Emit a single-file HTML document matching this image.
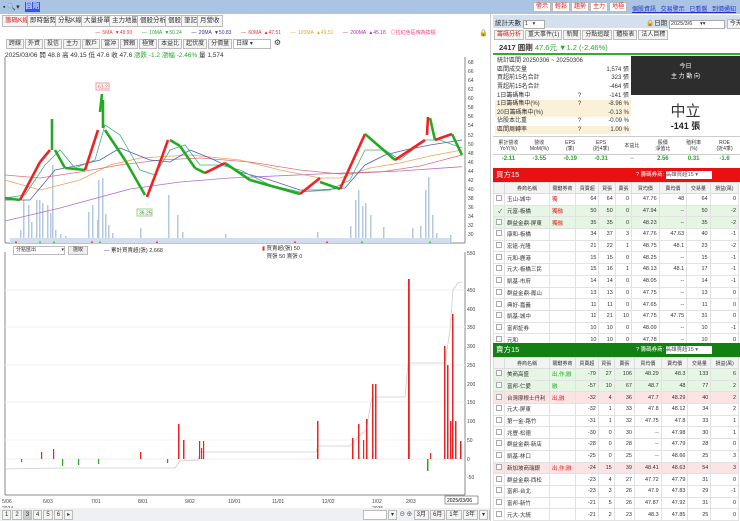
<!DOCTYPE html>
<html><head><meta charset="utf-8">
<style>
*{margin:0;padding:0;box-sizing:border-box}
body{width:740px;height:521px;overflow:hidden;background:#fff;font-family:"Liberation Sans","Noto Sans CJK TC",sans-serif;font-size:6px;color:#333;position:relative}
.a{position:absolute;white-space:nowrap}
.tab{position:absolute;top:15px;height:12px;border:1px solid #bbb;background:#f6f6f6;font-size:6.5px;line-height:10px;padding:0 2px;color:#333}
.tb{display:inline-block;border:1px solid #bbb;background:#f4f4f4;height:10px;line-height:8px;padding:0 2px;margin-right:1px;font-size:6px}
table{border-collapse:collapse}
.st td{font-size:6px;height:8.6px;line-height:8px;padding:0 2px}
.bt{width:246px;font-size:5.5px}
.bt td{border:1px solid #e2e2e2;height:11.7px;padding:0 2px;text-align:right}
.bt td:nth-child(1){width:8px}
.bt td:nth-child(2){text-align:left;width:45px}
.bt td:nth-child(3){text-align:left;width:26px}
.bt th{border:1px solid #ddd;background:#f3f3f3;font-weight:normal;height:11px;font-size:5px}
.cb{display:inline-block;width:6px;height:6px;border:1px solid #aaa;background:#fff}
</style></head><body>
<div class="a" style="left:0;top:0;width:740px;height:14px;background:#abc4e4"></div>
<div class="a" style="left:3px;top:3px;font-size:7px;color:#333">▪ 🔍▾</div>
<div class="a" style="left:25px;top:2px;width:15px;height:10px;background:#3355ee;color:#fff;font-size:7px;line-height:10px;text-align:center">圓剛</div>
<div class="a" style="left:533px;top:2px;font-size:5.5px">
<span class="tb" style="color:#d22;background:#fff">警示</span><span class="tb" style="color:#d22;background:#fff">輕鬆</span><span class="tb" style="color:#d22;background:#fff">趨勢</span><span class="tb" style="color:#d22;background:#fff">主力</span><span class="tb" style="color:#d22;background:#fff">地極</span></div>
<div class="a" style="left:632px;top:4px;font-size:6px;color:#2233cc;text-decoration:underline;word-spacing:3px">個股資訊 交易警示 已看盤 到價通知</div>
<div class="a" style="left:0;top:14px;width:490px;height:14px;background:#fff"></div>
<div class="tab" style="left:2px;color:#d22">籌碼K線</div>
<div class="tab" style="left:27px">即時盤勢</div>
<div class="tab" style="left:55px">分點K線</div>
<div class="tab" style="left:81px">大量掛單</div>
<div class="tab" style="left:109px">主力地圖</div>
<div class="tab" style="left:137px">個股分析</div>
<div class="tab" style="left:165px">個股</div>
<div class="tab" style="left:181px">筆記</div>
<div class="tab" style="left:197px">月營收</div>
<div class="a" style="left:95px;top:29px;font-size:5px;word-spacing:1px"><span style="color:#d44">— 5MA ▼48.90</span>&nbsp;&nbsp;&nbsp;&nbsp;<span style="color:#3a3">— 10MA ▼50.24</span>&nbsp;&nbsp;&nbsp;&nbsp;<span style="color:#33a">— 20MA ▼50.83</span>&nbsp;&nbsp;&nbsp;&nbsp;<span style="color:#d33">— 60MA ▲47.51</span>&nbsp;&nbsp;&nbsp;&nbsp;<span style="color:#da3">— 120MA ▲49.51</span>&nbsp;&nbsp;&nbsp;&nbsp;<span style="color:#a3a">— 200MA ▲45.18</span>&nbsp;&nbsp;<span style="color:#e48">◎拉紅色區塊為換檔</span></div>
<div class="a" style="left:479px;top:29px;font-size:7px">🔒</div>
<div class="a" style="left:6px;top:38px"><span class="tb">跨線</span><span class="tb">外資</span><span class="tb">投信</span><span class="tb">主力</span><span class="tb">散戶</span><span class="tb">當沖</span><span class="tb">贊賴</span><span class="tb">極覽</span><span class="tb">本益比</span><span class="tb">起伏度</span><span class="tb">分價量</span><span class="tb" style="width:38px;background:#fff">日線 ▾</span> <span style="font-size:8px">⚙</span></div>
<div class="a" style="left:5px;top:49px;font-size:6.5px">2025/03/06 開 48.8 高 49.15 低 47.6 收 47.6 <span style="color:#2a2">漲跌 -1.2 漲幅 -2.46%</span> 量 1,574</div>
<svg class="a" style="left:0;top:55px" width="490" height="190" viewBox="0 55 490 190">
<line x1="5" y1="57" x2="5" y2="243" stroke="#888"/>
<line x1="465" y1="57" x2="465" y2="243" stroke="#888"/>
<line x1="5" y1="243" x2="465" y2="243" stroke="#888"/>
<g font-size="5" fill="#444" font-family="Liberation Sans">
<text x="468" y="64">68</text><text x="468" y="73">66</text><text x="468" y="82">64</text><text x="468" y="91">62</text><text x="468" y="100">60</text><text x="468" y="109">58</text><text x="468" y="118">56</text><text x="468" y="127">54</text><text x="468" y="137">52</text><text x="468" y="146">50</text><text x="468" y="155">48</text><text x="468" y="164">46</text><text x="468" y="173">44</text><text x="468" y="182">42</text><text x="468" y="191">40</text><text x="468" y="200">38</text><text x="468" y="209">36</text><text x="468" y="218">34</text><text x="468" y="227">32</text><text x="468" y="236">30</text></g>
<g fill="#b4c8e2">
<rect x="20" y="230" width="1.5" height="13"/><rect x="23" y="200" width="1.5" height="43"/><rect x="28" y="205" width="1.5" height="38"/><rect x="31" y="222" width="1.5" height="21"/><rect x="36" y="200" width="1.5" height="43"/><rect x="39" y="200" width="1.5" height="43"/><rect x="42" y="203" width="1.5" height="40"/><rect x="47" y="205" width="1.5" height="38"/><rect x="50" y="213" width="1.5" height="30"/><rect x="52" y="165" width="1.5" height="78"/><rect x="55" y="230" width="1.5" height="13"/><rect x="60" y="234" width="1.5" height="9"/><rect x="65" y="236" width="1.5" height="7"/><rect x="88" y="212" width="1.5" height="31"/><rect x="92" y="205" width="1.5" height="38"/><rect x="97" y="220" width="1.5" height="23"/><rect x="98" y="180" width="1.5" height="63"/><rect x="102" y="178" width="1.5" height="65"/><rect x="105" y="214" width="1.5" height="29"/><rect x="108" y="225" width="1.5" height="18"/><rect x="112" y="233" width="1.5" height="10"/><rect x="140" y="228" width="1.5" height="15"/><rect x="168" y="195" width="1.5" height="48"/><rect x="177" y="215" width="1.5" height="28"/><rect x="182" y="232" width="1.5" height="11"/><rect x="225" y="234" width="1.5" height="9"/><rect x="317" y="232" width="1.5" height="11"/><rect x="350" y="226" width="1.5" height="17"/><rect x="355" y="200" width="1.5" height="43"/><rect x="358" y="190" width="1.5" height="53"/><rect x="362" y="206" width="1.5" height="37"/><rect x="365" y="203" width="1.5" height="40"/><rect x="370" y="215" width="1.5" height="28"/><rect x="383" y="227" width="1.5" height="16"/><rect x="412" y="228" width="1.5" height="15"/><rect x="420" y="226" width="1.5" height="17"/><rect x="425" y="190" width="1.5" height="53"/><rect x="428" y="177" width="1.5" height="66"/><rect x="432" y="215" width="1.5" height="28"/><rect x="436" y="233" width="1.5" height="10"/><rect x="450" y="235" width="1.5" height="8"/>
</g>
<g fill="#d2dded"><rect x="10" y="238" width="440" height="5"/></g>
<polyline fill="none" stroke="#b66ed0" stroke-width="0.8" points="5,221 60,208 130,189 180,182 230,178 330,173.5 400,171 462,166.7"/>
<polyline fill="none" stroke="#f0a050" stroke-width="0.8" points="5,180 40,190 80,180 110,165 140,158 190,155 240,160 280,170 320,178 340,178 370,168 400,163 430,156 462,150"/>
<polyline fill="none" stroke="#e07080" stroke-width="0.8" points="5,175 40,178 80,172 120,165 160,160 200,158 250,162 300,170 340,174 380,172 420,166 462,155"/>
<polyline fill="none" stroke="#5060c0" stroke-width="0.8" points="5,200 30,200 55,170 80,165 100,160 120,148 150,160 170,162 190,150 210,158 240,172 270,180 300,190 320,190 345,188 365,165 385,155 405,150 430,145 462,140"/>
<polyline fill="none" stroke="#40b080" stroke-width="0.8" points="5,198 25,195 45,165 60,150 75,168 95,160 105,125 120,135 140,170 155,175 170,150 185,145 200,165 220,165 240,170 270,185 300,192 330,190 350,180 365,150 385,150 400,160 425,140 440,140 462,148"/>
<g stroke-width="2.6">
<line x1="5" y1="198" x2="20" y2="200" stroke="#2a2"/>
<line x1="20" y1="200" x2="40" y2="162" stroke="#e22"/>
<line x1="40" y1="162" x2="50" y2="150" stroke="#e22"/>
<line x1="52" y1="119" x2="52" y2="150" stroke="#2a2"/>
<line x1="55" y1="150" x2="65" y2="168" stroke="#2a2"/>
<line x1="65" y1="168" x2="85" y2="170" stroke="#2a2"/>
<line x1="85" y1="170" x2="98" y2="130" stroke="#e22"/>
<line x1="100" y1="112" x2="102" y2="94" stroke="#2a2"/>
<line x1="103" y1="100" x2="103" y2="128" stroke="#2a2"/>
<line x1="105" y1="130" x2="125" y2="160" stroke="#2a2"/>
<line x1="125" y1="160" x2="145" y2="195" stroke="#2a2"/>
<line x1="147" y1="197" x2="158" y2="168" stroke="#e22"/>
<line x1="158" y1="168" x2="168" y2="140" stroke="#e22"/>
<line x1="170" y1="140" x2="180" y2="146" stroke="#2a2"/>
<line x1="180" y1="146" x2="195" y2="168" stroke="#2a2"/>
<line x1="195" y1="168" x2="205" y2="173" stroke="#2a2"/>
<line x1="205" y1="173" x2="225" y2="163" stroke="#e22"/>
<line x1="225" y1="163" x2="250" y2="180" stroke="#2a2"/>
<line x1="250" y1="180" x2="300" y2="194" stroke="#2a2"/>
<line x1="300" y1="194" x2="320" y2="178" stroke="#e22"/>
<line x1="320" y1="182" x2="340" y2="189" stroke="#2a2"/>
<line x1="340" y1="189" x2="365" y2="134" stroke="#e22"/>
<line x1="365" y1="134" x2="395" y2="160" stroke="#2a2"/>
<line x1="395" y1="160" x2="425" y2="140" stroke="#e22"/>
<line x1="427" y1="135" x2="428" y2="117" stroke="#e22"/>
<line x1="430" y1="118" x2="435" y2="140" stroke="#2a2"/>
<line x1="435" y1="140" x2="452" y2="134" stroke="#e22"/>
<line x1="452" y1="134" x2="462" y2="155" stroke="#2a2"/>
</g>
<rect x="96" y="83" width="13" height="7" fill="#fff" stroke="#e9a"/><text x="98" y="88.5" font-size="5" fill="#d44" font-family="Liberation Sans">61.2</text>
<rect x="137" y="209" width="15" height="7" fill="#fff" stroke="#ac8"/><text x="139" y="214.5" font-size="5" fill="#383" font-family="Liberation Sans">36.25</text>
<g font-size="4" fill="#e33"><text x="14" y="243">▲</text><text x="90" y="243">▲</text><text x="155" y="243">▲</text><text x="293" y="243">▲</text><text x="325" y="243">▲</text></g>
<g font-size="4" fill="#3c3"><text x="38" y="243">▲</text><text x="52" y="243">▲</text><text x="98" y="243">▲</text><text x="360" y="243">▲</text><text x="428" y="243">▲</text></g>
</svg>
<div class="a" style="left:13px;top:246px;width:52px;height:9px;border:1px solid #bbb;font-size:5px;line-height:7px;padding-left:2px">分點匯出 <span style="float:right">▾</span></div>
<div class="a" style="left:68px;top:246px;width:20px;height:9px;border:1px solid #bbb;background:#eee;font-size:5px;line-height:7px;text-align:center">選取</div>
<div class="a" style="left:104px;top:246px;font-size:5.5px">— 累計買賣超(張) 2,668</div>
<div class="a" style="left:262px;top:245px;font-size:5.5px;line-height:8px"><span style="color:#d33">▮</span> 買賣超(張) 50<br>&nbsp;&nbsp;&nbsp;買張 50 賣張 0</div>
<svg class="a" style="left:0;top:250px" width="490" height="258" viewBox="0 250 490 258">
<line x1="5" y1="252" x2="5" y2="495" stroke="#888"/>
<line x1="465" y1="252" x2="465" y2="495" stroke="#888"/>
<line x1="5" y1="495" x2="465" y2="495" stroke="#888"/>
<g stroke="#f0f0f0"><line x1="5" y1="290" x2="465" y2="290"/><line x1="5" y1="327" x2="465" y2="327"/><line x1="5" y1="365" x2="465" y2="365"/><line x1="5" y1="402" x2="465" y2="402"/><line x1="5" y1="440" x2="465" y2="440"/></g>
<g font-size="5" fill="#444" font-family="Liberation Sans">
<text x="467" y="255">550</text><text x="467" y="292">450</text><text x="467" y="311">400</text><text x="467" y="329">350</text><text x="467" y="348">300</text><text x="467" y="367">250</text><text x="467" y="386">200</text><text x="467" y="404">150</text><text x="467" y="423">100</text><text x="467" y="442">50</text><text x="467" y="461">0</text><text x="467" y="479">-50</text></g>
<line x1="5" y1="459" x2="465" y2="459" stroke="#ddd" stroke-width="0.5"/>
<polyline fill="none" stroke="#ccc" stroke-width="0.8" points="5,469 60,468 175,468 180,461 198,460 200,452 316,452 318,446 350,446 355,440 366,430 372,397 405,397 408,363 445,363 450,330 453,290 458,283 462,282"/>
<g fill="#e22">
<rect x="41" y="452" width="1.2" height="7"/><rect x="53" y="449" width="1.2" height="10"/><rect x="140" y="452" width="1.2" height="7"/><rect x="178" y="424" width="1.5" height="35"/><rect x="183" y="440" width="1.5" height="19"/><rect x="199" y="441" width="1.2" height="18"/><rect x="201" y="448" width="1.2" height="11"/><rect x="203" y="441" width="1.2" height="18"/><rect x="317" y="421" width="1.5" height="38"/><rect x="352" y="438" width="1.5" height="21"/><rect x="358" y="424" width="1.5" height="35"/><rect x="363" y="440" width="1.2" height="19"/><rect x="366" y="419" width="1.5" height="40"/><rect x="372" y="384" width="1.5" height="75"/><rect x="375" y="384" width="1.5" height="75"/><rect x="408" y="279" width="1.8" height="180"/><rect x="430" y="453" width="1.2" height="6"/><rect x="444" y="346" width="1.5" height="113"/><rect x="447" y="365" width="1.5" height="94"/><rect x="450" y="421" width="1.5" height="38"/><rect x="452" y="314" width="1.5" height="145"/><rect x="455" y="421" width="1.5" height="38"/><rect x="460" y="441" width="1.5" height="18"/>
</g>
<g fill="#2a2"><rect x="21" y="459" width="1.2" height="3"/><rect x="62" y="459" width="1.2" height="7"/><rect x="78" y="459" width="1.2" height="6"/><rect x="98" y="459" width="1.2" height="5"/><rect x="167" y="459" width="1.2" height="4"/><rect x="427" y="459" width="1.5" height="12"/></g>
<g font-size="5" fill="#444" font-family="Liberation Sans"><text x="2" y="503">5/06</text><text x="2" y="510">2024</text><text x="43" y="503">6/03</text><text x="91" y="503">7/01</text><text x="138" y="503">8/01</text><text x="185" y="503">9/02</text><text x="228" y="503">10/01</text><text x="272" y="503">11/01</text><text x="322" y="503">12/02</text><text x="372" y="503">1/02</text><text x="372" y="510">2025</text><text x="406" y="503">2/03</text></g>
<rect x="445" y="496" width="33" height="8" fill="#fff" stroke="#555" stroke-width="0.6"/><text x="447" y="502" font-size="5" font-family="Liberation Sans">2025/03/06</text>
</svg>
<div class="a" style="left:0;top:508px;width:490px;height:13px;background:#eef0f3"></div>
<div class="a" style="left:2px;top:510px;font-size:5.5px"><span class="tb">1</span><span class="tb">2</span><span class="tb" style="background:#ccc">3</span><span class="tb">4</span><span class="tb">5</span><span class="tb">6</span><span class="tb">▸</span></div>
<div class="a" style="left:363px;top:510px;font-size:5.5px"><span class="tb" style="width:24px;background:#fff">&nbsp;</span><span class="tb">▾</span> ⊖ ⊕ <span class="tb">3月</span><span class="tb">6月</span><span class="tb">1年</span><span class="tb">3年</span><span class="tb">▾</span><span class="tb">優價</span></div>
<div class="a" style="left:490px;top:14px;width:250px;height:507px;background:#fff;border-left:1px solid #ccc"></div>
<div class="a" style="left:493px;top:15px;width:247px;height:13px;background:#d5e0ee"></div>
<div class="a" style="left:495px;top:17px;font-size:6.5px">統計天數 <span style="display:inline-block;width:22px;height:9px;border:1px solid #aaa;background:#fff;font-size:5.5px;line-height:7px;padding-left:1px">1 &nbsp;&nbsp;▾</span></div>
<div class="a" style="left:646px;top:17px;font-size:6.5px">🔒日期 <span style="display:inline-block;width:56px;height:9px;border:1px solid #aaa;background:#fff;font-size:5.5px;line-height:7px;padding-left:1px">2025/3/6 &nbsp;&nbsp;&nbsp;&nbsp;▾▾</span> <span class="tb">今天</span></div>
<div class="a" style="left:494px;top:30px;font-size:5.5px"><span class="tb" style="color:#d22">籌碼分析</span><span class="tb">重大事件(1)</span><span class="tb">新聞</span><span class="tb">分點追蹤</span><span class="tb">體檢表</span><span class="tb">法人目標</span></div>
<div class="a" style="left:493px;top:41px;width:247px;height:14px;border-bottom:2px solid #3a3;font-size:7.5px;line-height:13px;padding-left:6px"><b>2417 圓剛</b> <span style="color:#2a2">47.6元 ▼1.2 (-2.46%)</span></div>
<table class="a st" style="left:495px;top:57px;width:136px">
<tr><td colspan="3">統計區間 20250306 ~ 20250306</td></tr>
<tr><td>區間成交量</td><td></td><td align="right">1,574 張</td></tr>
<tr><td>買超前15名合計</td><td></td><td align="right">323 張</td></tr>
<tr><td>賣超前15名合計</td><td></td><td align="right">-464 張</td></tr>
<tr><td>1日籌碼集中</td><td>?</td><td align="right">-141 張</td></tr>
<tr style="background:#fbf0d8"><td>1日籌碼集中(%)</td><td>?</td><td align="right">-8.96 %</td></tr>
<tr style="background:#fbf0d8"><td>20日籌碼集中(%)</td><td></td><td align="right">-0.13 %</td></tr>
<tr><td>佔股本比重</td><td>?</td><td align="right">-0.09 %</td></tr>
<tr style="background:#fbf0d8"><td>區間周轉率</td><td>?</td><td align="right">1.00 %</td></tr>
</table>
<div class="a" style="left:631px;top:56px;width:109px;height:39px;background:#2d2d2d;color:#fff;text-align:center;font-size:6px;line-height:10px;padding-top:6px">今日<br>主 力 動 向</div>
<div class="a" style="left:631px;top:100px;width:109px;text-align:center;font-size:15px;color:#333">中立</div>
<div class="a" style="left:631px;top:119px;width:109px;text-align:center;font-size:9px;font-weight:bold;color:#222">-141 張</div>
<div class="a" style="left:493px;top:136px;width:247px;height:19px;border-top:1px solid #ccc;border-bottom:1px solid #ccc;display:flex;font-size:5px;text-align:center;line-height:6px">
<div style="flex:1;padding-top:3px">累計營收<br>YoY(%)</div><div style="flex:1;padding-top:3px">營收<br>MoM(%)</div><div style="flex:1;padding-top:3px">EPS<br>(季)</div><div style="flex:1;padding-top:3px">EPS<br>(近4季)</div><div style="flex:1;padding-top:6px">本益比</div><div style="flex:1;padding-top:3px">股價<br>淨值比</div><div style="flex:1;padding-top:3px">殖利率<br>(%)</div><div style="flex:1;padding-top:3px">ROE<br>(近4季)</div></div>
<div class="a" style="left:493px;top:156px;width:247px;display:flex;font-size:6px;text-align:center;font-weight:bold;color:#2a2"><div style="flex:1">-2.11</div><div style="flex:1">-3.55</div><div style="flex:1">-0.19</div><div style="flex:1">-0.31</div><div style="flex:1;color:#999">--</div><div style="flex:1">2.56</div><div style="flex:1">0.31</div><div style="flex:1">-1.6</div></div>
<div class="a" style="left:493px;top:168px;width:247px;height:14px;background:#e81010;color:#fff;font-size:7.5px;line-height:14px;padding-left:3px">買方15<span style="position:absolute;left:143px;font-size:5.5px">? 籌碼券商: <span style="display:inline-block;width:46px;height:8px;background:#fff;color:#555;line-height:8px">高雄買超15 ▾</span></span></div>
<table class="a bt" style="left:493px;top:182px">
<tr><th></th><th>券商名稱</th><th>關鍵券商</th><th>買賣超</th><th>買張</th><th>賣張</th><th>買均價</th><th>賣均價</th><th>交易量</th><th>損益(萬)</th></tr>
<tr><td><span class="cb"></span></td><td>玉山-城中</td><td style="color:#d22">獨</td><td>64</td><td>64</td><td>0</td><td>47.76</td><td>48</td><td>64</td><td>0</td></tr>
<tr style="background:#e6f6e4"><td>✓</td><td>元富-板橋</td><td style="color:#d22">獨融</td><td>50</td><td>50</td><td>0</td><td>47.94</td><td>--</td><td>50</td><td>-2</td></tr>
<tr style="background:#e6f6e4"><td><span class="cb"></span></td><td>群益金鼎-屏東</td><td style="color:#d22">獨融</td><td>35</td><td>35</td><td>0</td><td>48.23</td><td>--</td><td>35</td><td>-2</td></tr>
<tr><td><span class="cb"></span></td><td>康和-板橋</td><td></td><td>34</td><td>37</td><td>3</td><td>47.76</td><td>47.63</td><td>40</td><td>-1</td></tr>
<tr><td><span class="cb"></span></td><td>宏遠-光隆</td><td></td><td>21</td><td>22</td><td>1</td><td>48.75</td><td>48.1</td><td>23</td><td>-2</td></tr>
<tr><td><span class="cb"></span></td><td>元和-鹿港</td><td></td><td>15</td><td>15</td><td>0</td><td>48.25</td><td>--</td><td>15</td><td>-1</td></tr>
<tr><td><span class="cb"></span></td><td>元大-板橋三民</td><td></td><td>15</td><td>16</td><td>1</td><td>48.13</td><td>48.1</td><td>17</td><td>-1</td></tr>
<tr><td><span class="cb"></span></td><td>凱基-市府</td><td></td><td>14</td><td>14</td><td>0</td><td>48.05</td><td>--</td><td>14</td><td>-1</td></tr>
<tr><td><span class="cb"></span></td><td>群益金鼎-鳳山</td><td></td><td>13</td><td>13</td><td>0</td><td>47.75</td><td>--</td><td>13</td><td>0</td></tr>
<tr><td><span class="cb"></span></td><td>典好-嘉義</td><td></td><td>11</td><td>11</td><td>0</td><td>47.65</td><td>--</td><td>11</td><td>0</td></tr>
<tr><td><span class="cb"></span></td><td>凱基-城中</td><td></td><td>11</td><td>21</td><td>10</td><td>47.75</td><td>47.75</td><td>31</td><td>0</td></tr>
<tr><td><span class="cb"></span></td><td>富邦証券</td><td></td><td>10</td><td>10</td><td>0</td><td>48.09</td><td>--</td><td>10</td><td>-1</td></tr>
<tr><td><span class="cb"></span></td><td>元和</td><td></td><td>10</td><td>10</td><td>0</td><td>47.78</td><td>--</td><td>10</td><td>0</td></tr>
</table>
<div class="a" style="left:493px;top:343px;width:247px;height:14px;background:#128012;color:#fff;font-size:7.5px;line-height:14px;padding-left:3px">賣方15<span style="position:absolute;left:143px;font-size:5.5px">? 籌碼券商: <span style="display:inline-block;width:46px;height:8px;background:#fff;color:#555;line-height:8px">高雄賣超15 ▾</span></span></div>
<table class="a bt" style="left:493px;top:357px">
<tr><th></th><th>券商名稱</th><th>關鍵券商</th><th>買賣超</th><th>買張</th><th>賣張</th><th>買均價</th><th>賣均價</th><th>交易量</th><th>損益(萬)</th></tr>
<tr style="background:#e6f6e4"><td><span class="cb"></span></td><td>美商高盛</td><td style="color:#2a2">出,作,融</td><td>-79</td><td>27</td><td>106</td><td>48.29</td><td>48.3</td><td>133</td><td>6</td></tr>
<tr style="background:#e6f6e4"><td><span class="cb"></span></td><td>富邦-仁愛</td><td style="color:#2a2">融</td><td>-57</td><td>10</td><td>67</td><td>48.7</td><td>48</td><td>77</td><td>2</td></tr>
<tr style="background:#fde4e4"><td><span class="cb"></span></td><td>台灣摩根士丹利</td><td style="color:#d22">出,融</td><td>-32</td><td>4</td><td>36</td><td>47.7</td><td>48.29</td><td>40</td><td>2</td></tr>
<tr><td><span class="cb"></span></td><td>元大-屏東</td><td></td><td>-32</td><td>1</td><td>33</td><td>47.8</td><td>48.12</td><td>34</td><td>2</td></tr>
<tr><td><span class="cb"></span></td><td>第一金-路竹</td><td></td><td>-31</td><td>1</td><td>32</td><td>47.75</td><td>47.8</td><td>33</td><td>1</td></tr>
<tr><td><span class="cb"></span></td><td>兆豐-松德</td><td></td><td>-30</td><td>0</td><td>30</td><td>--</td><td>47.98</td><td>30</td><td>1</td></tr>
<tr><td><span class="cb"></span></td><td>群益金鼎-新店</td><td></td><td>-28</td><td>0</td><td>28</td><td>--</td><td>47.79</td><td>28</td><td>0</td></tr>
<tr><td><span class="cb"></span></td><td>凱基-林口</td><td></td><td>-25</td><td>0</td><td>25</td><td>--</td><td>48.66</td><td>25</td><td>3</td></tr>
<tr style="background:#fde4e4"><td><span class="cb"></span></td><td>新加坡商瑞銀</td><td style="color:#d22">出,作,融</td><td>-24</td><td>15</td><td>39</td><td>48.41</td><td>48.63</td><td>54</td><td>3</td></tr>
<tr><td><span class="cb"></span></td><td>群益金鼎-西松</td><td></td><td>-23</td><td>4</td><td>27</td><td>47.72</td><td>47.79</td><td>31</td><td>0</td></tr>
<tr><td><span class="cb"></span></td><td>富邦-台北</td><td></td><td>-23</td><td>3</td><td>26</td><td>47.9</td><td>47.83</td><td>29</td><td>-1</td></tr>
<tr><td><span class="cb"></span></td><td>富邦-新竹</td><td></td><td>-21</td><td>5</td><td>26</td><td>47.87</td><td>47.92</td><td>31</td><td>0</td></tr>
<tr><td><span class="cb"></span></td><td>元大-大統</td><td></td><td>-21</td><td>2</td><td>23</td><td>48.3</td><td>47.85</td><td>25</td><td>0</td></tr>
</table>
</body></html>
